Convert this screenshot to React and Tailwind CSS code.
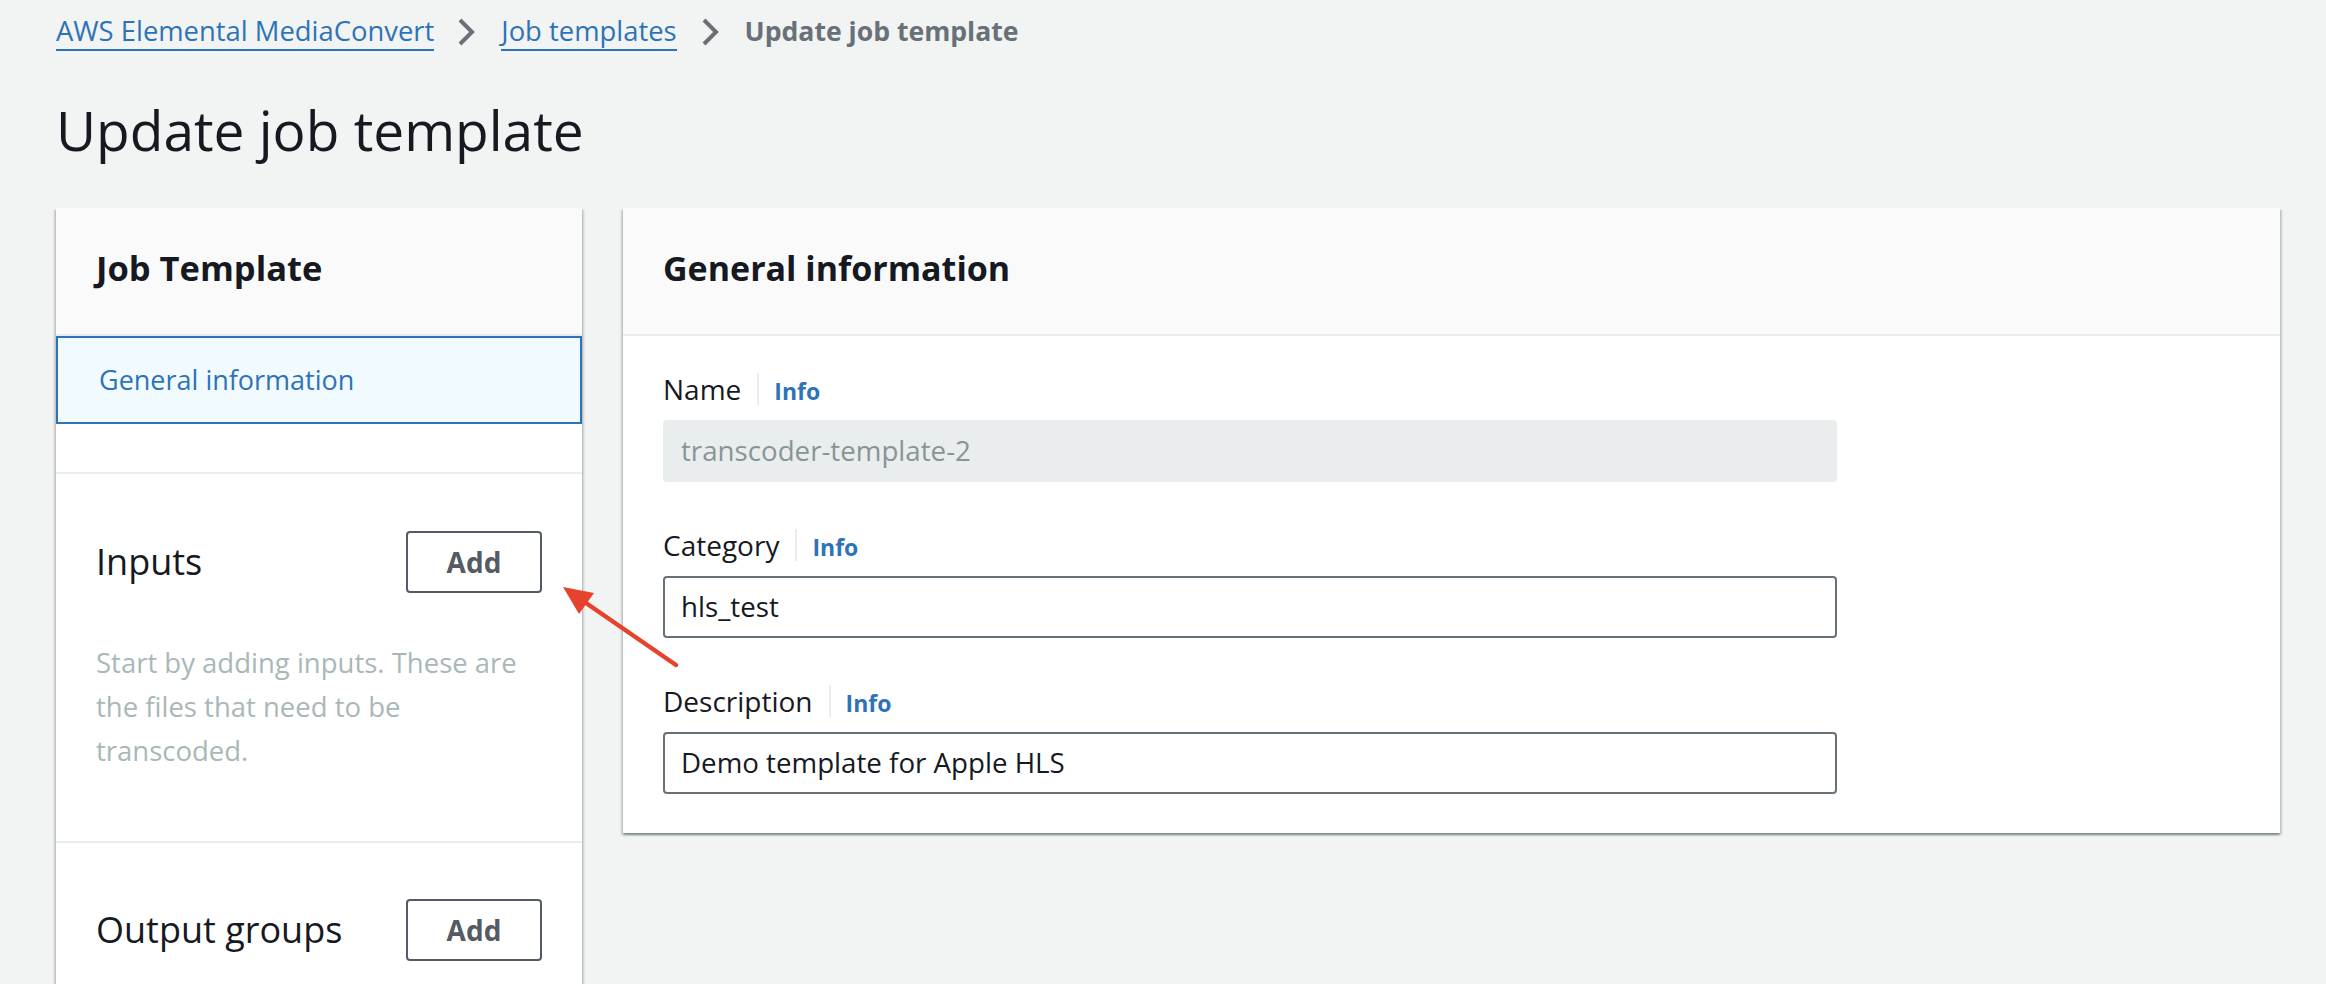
import React from "react";

function Chevron() {
  return (
    <svg width="18" height="30" viewBox="0 0 18 30" className="shrink-0">
      <polyline points="3,3 15,15 3,27" fill="none" stroke="#687078" strokeWidth="4" strokeLinecap="butt" strokeLinejoin="miter" />
    </svg>
  );
}

function Field({ label, value, disabled }) {
  return (
    <div className="flex flex-col">
      <div className="flex items-baseline h-[44px] leading-[44px]">
        <span className="text-[28px] text-[#16191f]">{label}</span>
        <span className="self-center ml-[16px] w-[2px] h-[32px] bg-[#eaeded]" />
        <span className="ml-[15px] text-[23px] font-bold text-[#2e73b8]">Info</span>
      </div>
      <div
        className={
          disabled
            ? "mt-[9px] w-[1174px] h-[62px] flex items-center px-[16px] rounded-[4px] border-2 border-[#eaeded] bg-[#eaeded] text-[27.7px] text-[#879596]"
            : "mt-[9px] w-[1174px] h-[62px] flex items-center px-[16px] rounded-[4px] border-2 border-[#687078] bg-white text-[27.7px] text-[#16191f]"
        }
      >
        {value}
      </div>
    </div>
  );
}

const panelShadow =
  "shadow-[0_2px_2px_0_rgba(0,28,36,0.3),2px_2px_2px_0_rgba(0,28,36,0.15),-2px_2px_2px_0_rgba(0,28,36,0.15)]";

export default function App() {
  return (
    <div className="relative w-[2326px] h-[984px] overflow-hidden bg-[#f2f3f3] font-['Open_Sans',sans-serif] pl-[56px] pr-[46px]">
      {/* Breadcrumb */}
      <div className="flex items-center pt-[13px] text-[27.4px]">
        <span className="inline-block leading-[36px] border-b-2 border-[#2e73b8] text-[#2e73b8]">AWS Elemental MediaConvert</span>
        <span className="ml-[23px] mr-[26px] flex items-center"><Chevron /></span>
        <span className="inline-block leading-[36px] border-b-2 border-[#2e73b8] text-[#2e73b8]">Job templates</span>
        <span className="ml-[24px] mr-[26px] flex items-center"><Chevron /></span>
        <span className="inline-block leading-[36px] border-b-2 border-transparent text-[26.6px] font-bold text-[#687078]">Update job template</span>
      </div>

      {/* Title */}
      <h1 className="mt-[45px] text-[55px] leading-[68px] text-[#16191f] font-normal">Update job template</h1>

      {/* Main columns */}
      <div className="mt-[44px] flex items-start gap-[41px]">
        {/* Left panel */}
        <div className={"w-[526px] shrink-0 bg-white " + panelShadow}>
          <div className="h-[128px] flex items-center px-[40px] pb-[6px] bg-[#fafafa] border-b-2 border-[#eaeded]">
            <span className="text-[34.5px] font-bold text-[#16191f]">Job Template</span>
          </div>
          <div className="h-[88px] flex items-center px-[41px] border-2 border-[#2e73b8] bg-[#f1faff]">
            <span className="text-[27px] text-[#2e73b8]">General information</span>
          </div>
          <div className="h-[48px]" />
          <div className="border-t-2 border-[#eaeded] px-[40px] pt-[57px] pb-[68px]">
            <div className="flex items-center justify-between h-[62px]">
              <span className="text-[36px] text-[#16191f]">Inputs</span>
              <button className="w-[136px] h-[62px] rounded-[4px] border-2 border-[#545b64] bg-white text-[28px] font-bold text-[#545b64]">Add</button>
            </div>
            <p className="mt-[48px] text-[27.5px] leading-[44px] text-[#aab7b8]">
              Start by adding inputs. These are the files that need to be transcoded.
            </p>
          </div>
          <div className="border-t-2 border-[#eaeded] px-[40px] pt-[56px] pb-[120px]">
            <div className="flex items-center justify-between h-[62px]">
              <span className="text-[36px] text-[#16191f]">Output groups</span>
              <button className="w-[136px] h-[62px] rounded-[4px] border-2 border-[#545b64] bg-white text-[28px] font-bold text-[#545b64]">Add</button>
            </div>
          </div>
        </div>

        {/* Right panel */}
        <div className={"flex-1 bg-white " + panelShadow}>
          <div className="h-[128px] flex items-center px-[40px] pb-[6px] bg-[#fafafa] border-b-2 border-[#eaeded]">
            <span className="text-[34px] font-bold text-[#16191f]">General information</span>
          </div>
          <div className="flex flex-col gap-[41px] px-[40px] pt-[31px] pb-[39px]">
            <Field label="Name" value="transcoder-template-2" disabled />
            <Field label="Category" value="hls_test" />
            <Field label="Description" value="Demo template for Apple HLS" />
          </div>
        </div>
      </div>

      {/* Annotation arrow */}
      <svg className="absolute left-0 top-0 pointer-events-none" width="2326" height="984" viewBox="0 0 2326 984">
        <line x1="676" y1="665" x2="586" y2="603" stroke="#e6432c" strokeWidth="4.5" strokeLinecap="round" />
        <polygon points="563,587 594,593 579,614" fill="#e6432c" />
      </svg>
    </div>
  );
}
